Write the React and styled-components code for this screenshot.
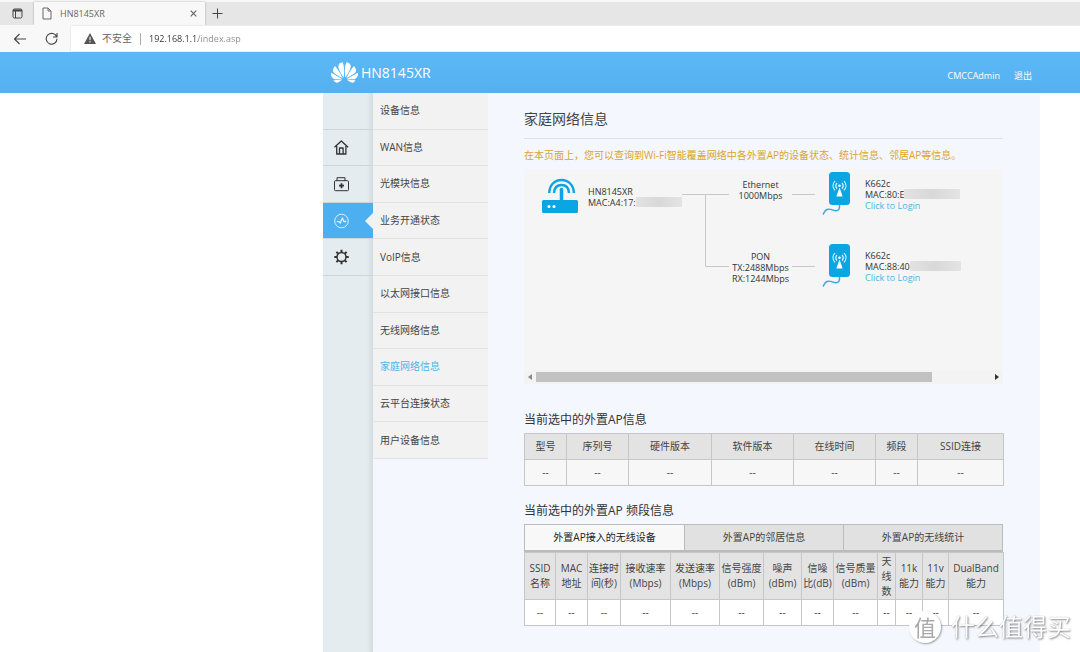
import React, { useState } from 'react'
import styled, { createGlobalStyle, css } from 'styled-components'
import { SiHuawei } from 'react-icons/si'

const GlobalStyle = createGlobalStyle`
  * {
    box-sizing: border-box;
  }

  body {
    margin: 0;
    background-color: #fff;
    color: #444;
    font-family: 'Open Sans', 'Noto Sans CJK SC', sans-serif;
    font-size: 10px;
    line-height: 15px;
  }

  button,
  input {
    margin: 0;
    border: 0;
    padding: 0;
    background: none;
    color: inherit;
    font: inherit;
  }

  button {
    cursor: pointer;
  }

  a {
    color: inherit;
    text-decoration: none;
  }

  svg {
    display: block;
    flex: none;
  }
`

const Window = styled.div`
  display: flex;
  flex-direction: column;
  min-height: 100vh;
`

/* Browser */

const TabStrip = styled.div`
  display: flex;
  height: 25px;
  border-top: 2px solid #f7f7f7;
  background-color: #e6e6e6;
`

const StripButton = styled.button`
  display: flex;
  align-items: center;
  justify-content: center;
  width: ${props => props.$width}px;
`

const BrowserTab = styled.div`
  display: flex;
  align-items: center;
  gap: 8px;
  width: 171px;
  padding: 0 8px;
  background-color: #f8f8f8;
  box-shadow: 0 0 2px rgba(0, 0, 0, 0.3);
  color: #666;
  font-size: 9px;

  .title {
    flex: 1;
  }
`

const Toolbar = styled.div`
  position: relative;
  display: flex;
  align-items: center;
  height: 27px;
  padding: 1px 0 1px 13px;
  background-color: #f8f8f8;
`

const ToolButton = styled.button`
  margin-right: 18px;
`

const AddressBar = styled.label`
  display: flex;
  flex: 1;
  align-items: center;
  gap: 6px;
  align-self: stretch;
  margin-left: -5px;
  padding-left: 13px;
  background-color: #fff;
  box-shadow: 0 0 1px rgba(0, 0, 0, 0.25);
  color: #666;

  .divider {
    width: 1px;
    height: 12px;
    margin: 0 2px;
    background-color: #aaa;
  }
`

const AddressInput = styled.input`
  flex: 1;
  height: 20px;
  outline: none;
  background: linear-gradient(90deg, #333 49px, #888 49px);
  background-clip: text;
  font-size: 9px;
  -webkit-text-fill-color: transparent;
`

/* Router page */

const Header = styled.header`
  display: flex;
  align-items: center;
  justify-content: space-between;
  height: 41px;
  padding: 0 48px 0 331px;
  background: linear-gradient(#5db8f7, #55b0ef);
  color: #fff;
`

const Brand = styled.div`
  display: flex;
  align-items: center;
  gap: 3px;
  font-size: 14px;
`

const Account = styled.div`
  display: flex;
  gap: 14px;
  padding-top: 5px;
  font-size: 9px;
`

const Page = styled.div`
  display: grid;
  flex: 1;
  grid-template-columns: 50px 115px minmax(0, 1fr);
  margin: 0 40px 0 323px;
  background-color: #f4f7fd;
`

const IconRail = styled.nav`
  background: linear-gradient(90deg, #e4ecef 88%, #d2dbde);
`

const RailList = styled.div`
  display: grid;
  grid-template-rows: repeat(5, 1fr);
  height: 183px;
`

const RailItem = styled.a`
  position: relative;
  display: flex;
  align-items: center;
  padding-left: 10px;
  border-bottom: 1px solid #cdd4d7;
  color: #333;

  ${props =>
    props.$active &&
    css`
      background-color: #4cb0f0;
      color: #d9f0ff;

      &::after {
        content: '';
        position: absolute;
        top: 10px;
        right: 0;
        border: 8px solid transparent;
        border-left: 0;
        border-right-color: #f1f1f1;
      }
    `}
`

const SideMenu = styled.nav`
  display: grid;
  grid-template-rows: repeat(10, 1fr);
  align-self: start;
  height: 366px;
  background-color: #f2f2f2;
`

const MenuLink = styled.a`
  display: flex;
  align-items: center;
  padding-left: 7px;
  border-bottom: 1px solid #e2e2e2;
  color: ${props => (props.$active ? '#4fb4e6' : '#444')};
`

const Content = styled.main`
  padding: 0 37px 24px 36px;
`

const Title = styled.h1`
  margin: 14px 0 8px;
  padding-bottom: 7px;
  border-bottom: 1px solid #dfe2e8;
  color: #444;
  font-size: 14px;
  font-weight: 400;
  line-height: 24px;
`

const Notice = styled.p`
  margin: 0 0 6px;
  color: #dba52c;
  line-height: 16px;
  white-space: nowrap;
`

const SectionTitle = styled.h2`
  margin: ${props => props.$top}px 0 5px;
  color: #333;
  font-size: 12px;
  font-weight: 400;
  line-height: 16px;
`

/* Topology */

const Topology = styled.div`
  display: flex;
  height: 201px;
  padding-left: 17px;
  background-color: #f5f5f5;
  color: #333;
  font-size: 9px;
  line-height: 11px;
  white-space: nowrap;
`

const Root = styled.div`
  display: flex;
  gap: 9px;
  width: 141px;
  padding-top: 9px;
`

const RootText = styled.div`
  padding-top: 8px;
`

const Masked = styled.span`
  display: inline-block;
  width: ${props => props.$width}px;
  height: 10px;
  background: linear-gradient(90deg, #e2e2e2, #d8d8d8 50%, #e4e4e4);
  vertical-align: top;
`

const Branch = styled.div`
  display: flex;
  align-items: flex-start;
  height: 72px;
`

const LinkLabel = styled.div`
  width: 63px;
  padding-top: 10px;
  text-align: center;
`

const LinkLine = styled.div`
  width: 23px;
  height: 1px;
  margin: 25px 7px 0 0;
  background-color: #c8c8c8;
`

const NodeIcon = styled.div`
  padding-top: 3px;
`

const NodeText = styled.div`
  padding: 9px 0 0 14px;

  a {
    color: #4fb4e0;
  }
`

const ScrollBar = styled.div`
  display: flex;
  align-items: center;
  height: 14px;
  background-color: #f3f3f3;

  button {
    display: flex;
    justify-content: center;
    width: 12px;
  }

  .track {
    flex: 1;
  }

  .thumb {
    width: 87%;
    height: 10px;
    background-color: #c1c1c1;
  }
`

/* Tables */

const Table = styled.table`
  width: 100%;
  border-collapse: collapse;
  table-layout: fixed;
  text-align: center;

  th,
  td {
    height: 26px;
    border: 1px solid #c6c6c6;
    padding: 0;
  }

  th {
    height: ${props => props.$head}px;
    background-color: #e3e3e3;
    font-weight: 400;
  }

  td {
    background-color: ${props => props.$cell};
  }
`

const Col = styled.col`
  width: ${props => props.$width}px;
`

const Tabs = styled.div`
  display: grid;
  grid-template-columns: repeat(3, 1fr);
  height: 28px;
  border: 1px solid #bbb;
  border-bottom-width: 2px;
`

const Tab = styled.button`
  background-color: ${props => (props.$active ? '#f8f8f8' : '#e1e1e1')};
  color: ${props => (props.$active ? '#222' : '#444')};

  & + & {
    border-left: 1px solid #bbb;
  }
`

/* Watermark */

const Watermark = styled.div`
  position: fixed;
  right: 9px;
  bottom: 9px;
  display: flex;
  align-items: center;
  gap: 10px;
  color: #fff;
  font-size: 24px;
  line-height: 32px;
  text-shadow: 1px 1px 2px rgba(0, 0, 0, 0.45), 0 0 1px rgba(0, 0, 0, 0.3);

  .badge {
    width: 32px;
    height: 32px;
    border-radius: 50%;
    background-color: #fff;
    box-shadow: 1px 1px 2px rgba(0, 0, 0, 0.35);
    color: #aaa;
    font-size: 22px;
    text-align: center;
    text-shadow: none;
  }
`

const Stroke = ({ width, height, weight = 1, children }) => (
  <svg
    width={width}
    height={height}
    viewBox={`0 0 ${width} ${height}`}
    fill="none"
    stroke="currentColor"
    strokeWidth={weight}
    strokeLinejoin="round"
    aria-hidden="true"
  >
    {children}
  </svg>
)

const HomeIcon = () => (
  <Stroke width={16} height={16} weight={1.3}>
    <path d="M1.5 8.3 8.3 2l6.800 6.300" />
    <path d="M3.700 7v8h9.200V7" />
    <path d="M6.500 15V9h3.600v6" />
  </Stroke>
)

const KitIcon = () => (
  <Stroke width={16} height={16}>
    <path d="M4 5V1.700h8V5" />
    <rect x="1.5" y="4.7" width="14" height="10" rx="1" />
    <path d="M8.500 7.200v5M6 9.700h5" strokeWidth="1.8" />
  </Stroke>
)

const PulseIcon = () => (
  <Stroke width={17} height={16}>
    <circle cx="8.5" cy="8" r="6.8" />
    <path d="M3.800 8.600h2L7.300 10l2-5 1.600 3.500h2.300" strokeWidth="1.3" />
  </Stroke>
)

const GearIcon = () => (
  <Stroke width={17} height={16}>
    <circle cx="8.5" cy="8" r="4.5" strokeWidth="1.5" />
    <path
      d="M8.5 3.5V.8M8.5 12.5v2.7M4 8H1.3M13 8h2.7M5.3 4.8 3.4 2.9M11.7 4.8l1.9-1.9M5.3 11.2l-1.9 1.9M11.7 11.2l1.9 1.9"
      strokeWidth="2"
    />
  </Stroke>
)

const RouterIcon = () => (
  <svg width="38" height="36" viewBox="0 0 38 36" fill="none" stroke="#0ba5e4" aria-hidden="true">
    <rect x="1" y="22" width="36" height="13" rx="1.5" fill="#0ba5e4" stroke="none" />
    <path d="M20.5 22V11.5" strokeWidth="3.5" strokeLinecap="round" />
    <path d="M8.2 15C8.5 7 13.5 2 20.5 2s12 5 12.5 13" strokeWidth="2.4" />
    <path d="M13 15c.3-5 3.2-8 7.5-8s7.2 3 7.5 8" strokeWidth="2.4" />
    <circle cx="8" cy="28.5" r="1.5" fill="#fff" stroke="none" />
    <circle cx="13" cy="28.5" r="1.5" fill="#fff" stroke="none" />
  </svg>
)

const ApIcon = () => (
  <svg width="29" height="44" viewBox="0 0 29 44" fill="none" aria-hidden="true">
    <rect x="7" width="21" height="33" rx="3.5" fill="#0ba5e4" />
    <path
      d="M17.5 33c.5 4-1 6-4 5.7-3.5-.4-5-2.5-8.5-1.2C2.5 38.5 2.3 40.5 1 42.5"
      stroke="#35a9d8"
      strokeWidth="1.4"
    />
    <path d="M17.5 15.5 20.7 24.5h-6.4z" fill="#fff" />
    <circle cx="17.5" cy="13.7" r="1.3" fill="#fff" />
    <path
      d="M15 10.8c-1.500 1.800-1.500 4 0 5.800M20 10.800c1.500 1.800 1.500 4 0 5.800M13 9c-2.600 2.800-2.600 6.600 0 9.400M22 9c2.600 2.800 2.600 6.600 0 9.400"
      stroke="#fff"
      strokeWidth="1.1"
    />
  </svg>
)

const TrunkLines = () => (
  <svg width="47" height="120" viewBox="0 0 47 120" stroke="#c8c8c8" fill="none" aria-hidden="true">
    <path d="M0 25.5h47M23.5 25.5v72h23.5" />
  </svg>
)

const railItems = [
  { name: '首页', icon: <HomeIcon /> },
  { name: '一键诊断', icon: <KitIcon /> },
  { name: '状态', icon: <PulseIcon />, active: true },
  { name: '设置', icon: <GearIcon /> }
]

const menuItems = [
  '设备信息',
  'WAN信息',
  '光模块信息',
  '业务开通状态',
  'VoIP信息',
  '以太网接口信息',
  '无线网络信息',
  '家庭网络信息',
  '云平台连接状态',
  '用户设备信息'
]

const accessPoints = [
  { link: ['Ethernet', '1000Mbps'], name: 'K662c', mac: 'MAC:80:E', masked: 56 },
  {
    link: ['PON', 'TX:2488Mbps', 'RX:1244Mbps'],
    name: 'K662c',
    mac: 'MAC:88:40',
    masked: 51
  }
]

const apColumns = [
  [42, '型号'],
  [62, '序列号'],
  [83, '硬件版本'],
  [82, '软件版本'],
  [82, '在线时间'],
  [42, '频段'],
  [86, 'SSID连接']
]

const bandTabs = ['外置AP接入的无线设备', '外置AP的邻居信息', '外置AP的无线统计']

const bandColumns = [
  [31, 'SSID', '名称'],
  [32, 'MAC', '地址'],
  [33, '连接时', '间(秒)'],
  [50, '接收速率', '(Mbps)'],
  [49, '发送速率', '(Mbps)'],
  [44, '信号强度', '(dBm)'],
  [38, '噪声', '(dBm)'],
  [32, '信噪', '比(dB)'],
  [44, '信号质量', '(dBm)'],
  [18, '天', '线', '数'],
  [27, '11k', '能力'],
  [26, '11v', '能力'],
  [55, 'DualBand', '能力']
]

function Browser() {
  return (
    <>
      <TabStrip>
        <StripButton $width={34} aria-label="标签页操作">
          <Stroke width={11} height={11}>
            <rect x="1" y="1" width="9" height="9" rx="1.5" />
            <path d="M1 2.5h9" strokeWidth="2" />
            <path d="M3.5 3v7" />
          </Stroke>
        </StripButton>
        <BrowserTab>
          <Stroke width={10} height={13}>
            <path d="M1 1h5l3 3v8H1zM6 1v3h3" />
          </Stroke>
          <span className="title">HN8145XR</span>
          <button aria-label="关闭标签页">
            <Stroke width={7} height={7} weight={1.2}>
              <path d="m.7.7 5.6 5.6M6.3.7.7 6.3" />
            </Stroke>
          </button>
        </BrowserTab>
        <StripButton $width={24} aria-label="新建标签页">
          <Stroke width={11} height={11}>
            <path d="M5.5.5v10M.5 5.5h10" />
          </Stroke>
        </StripButton>
      </TabStrip>
      <Toolbar>
        <ToolButton aria-label="后退">
          <Stroke width={14} height={12} weight={1.1}>
            <path d="M13 6H1.5M6.5 1l-5 5 5 5" />
          </Stroke>
        </ToolButton>
        <ToolButton aria-label="刷新">
          <Stroke width={13} height={13} weight={1.1}>
            <path d="M11.7 5A5.4 5.4 0 1 0 12 6.8M12 1v4H8" />
          </Stroke>
        </ToolButton>
        <AddressBar>
          <svg width="12" height="11" viewBox="0 0 12 11" aria-hidden="true">
            <path d="M6 0 12 11H0z" fill="#555" />
            <path d="M6 3.8v3.5M6 8.3v1.2" stroke="#fff" strokeWidth="1.1" />
          </svg>
          <span>不安全</span>
          <span className="divider" />
          <AddressInput aria-label="地址栏" defaultValue="192.168.1.1/index.asp" />
        </AddressBar>
      </Toolbar>
    </>
  )
}

function NetworkMap() {
  return (
    <>
      <Topology>
        <Root>
          <RouterIcon />
          <RootText>
            <div>HN8145XR</div>
            <div>
              MAC:A4:17:
              <Masked $width={46} />
            </div>
          </RootText>
        </Root>
        <TrunkLines />
        <div>
          {accessPoints.map(ap => (
            <Branch key={ap.mac}>
              <LinkLabel>
                {ap.link.map(line => (
                  <div key={line}>{line}</div>
                ))}
              </LinkLabel>
              <LinkLine />
              <NodeIcon>
                <ApIcon />
              </NodeIcon>
              <NodeText>
                <div>{ap.name}</div>
                <div>
                  {ap.mac}
                  <Masked $width={ap.masked} />
                </div>
                <a href="#login">Click to Login</a>
              </NodeText>
            </Branch>
          ))}
        </div>
      </Topology>
      <ScrollBar>
        <button aria-label="向左滚动">
          <svg width="4" height="6" viewBox="0 0 4 6">
            <path d="M4 0v6L0 3z" fill="#888" />
          </svg>
        </button>
        <div className="track">
          <div className="thumb" />
        </div>
        <button aria-label="向右滚动">
          <svg width="4" height="6" viewBox="0 0 4 6">
            <path d="M0 0v6l4-3z" fill="#333" />
          </svg>
        </button>
      </ScrollBar>
    </>
  )
}

function DataTable({ columns, head, cell }) {
  return (
    <Table $head={head} $cell={cell}>
      <colgroup>
        {columns.map(([width, ...lines]) => (
          <Col key={lines.join('')} $width={width} />
        ))}
      </colgroup>
      <thead>
        <tr>
          {columns.map(([, ...lines]) => (
            <th key={lines.join('')}>
              {lines.map(line => (
                <div key={line}>{line}</div>
              ))}
            </th>
          ))}
        </tr>
      </thead>
      <tbody>
        <tr>
          {columns.map(([, ...lines]) => (
            <td key={lines.join('')}>--</td>
          ))}
        </tr>
      </tbody>
    </Table>
  )
}

export default function App() {
  const [tab, setTab] = useState(0)

  return (
    <Window>
      <GlobalStyle />
      <Browser />

      <Header>
        <Brand>
          <SiHuawei size={27} aria-hidden="true" />
          <span>HN8145XR</span>
        </Brand>
        <Account>
          <span>CMCCAdmin</span>
          <a href="#logout">退出</a>
        </Account>
      </Header>

      <Page>
        <IconRail>
          <RailList>
            <RailItem as="div" />
            {railItems.map(item => (
              <RailItem
                key={item.name}
                href="#section"
                aria-label={item.name}
                $active={item.active}
              >
                {item.icon}
              </RailItem>
            ))}
          </RailList>
        </IconRail>

        <SideMenu>
          {menuItems.map(name => (
            <MenuLink key={name} href="#menu" $active={name === '家庭网络信息'}>
              {name}
            </MenuLink>
          ))}
        </SideMenu>

        <Content>
          <Title>家庭网络信息</Title>
          <Notice>
            在本页面上，您可以查询到Wi-Fi智能覆盖网络中各外置AP的设备状态、统计信息、邻居AP等信息。
          </Notice>
          <NetworkMap />

          <SectionTitle $top={28}>当前选中的外置AP信息</SectionTitle>
          <DataTable columns={apColumns} head={26} cell="#f7f7f7" />

          <SectionTitle $top={17}>当前选中的外置AP 频段信息</SectionTitle>
          <Tabs role="tablist">
            {bandTabs.map((name, index) => (
              <Tab
                key={name}
                role="tab"
                aria-selected={tab === index}
                $active={tab === index}
                onClick={() => setTab(index)}
              >
                {name}
              </Tab>
            ))}
          </Tabs>
          <DataTable columns={bandColumns} head={47} cell="#fff" />
        </Content>
      </Page>

      <Watermark>
        <span className="badge">值</span>
        <span>什么值得买</span>
      </Watermark>
    </Window>
  )
}
